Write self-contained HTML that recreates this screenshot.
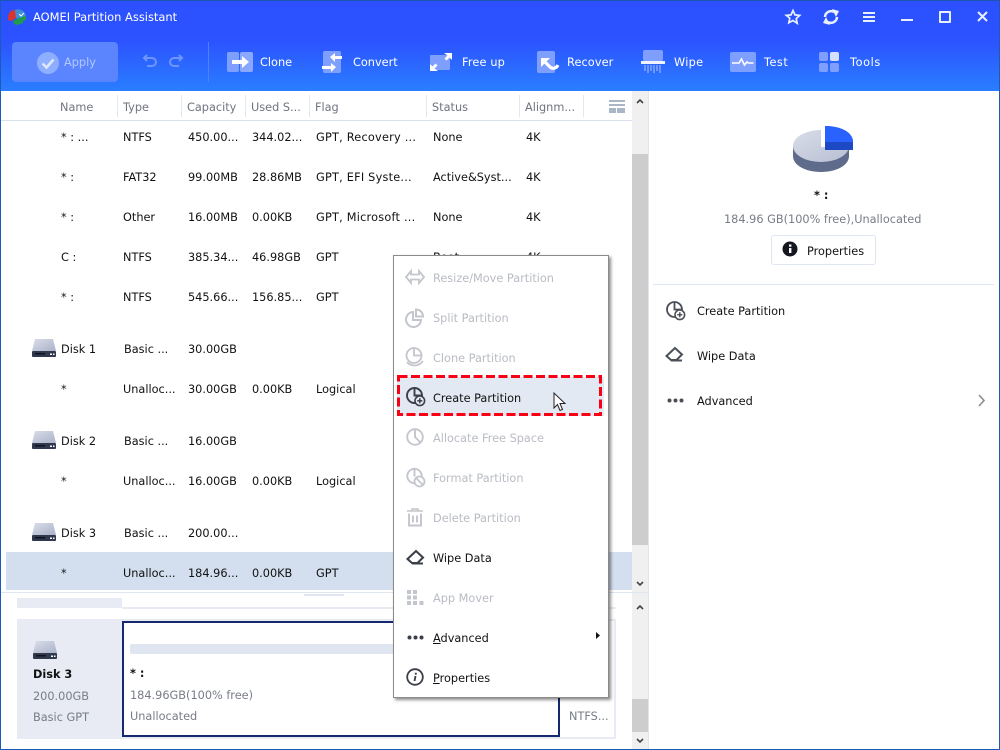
<!DOCTYPE html>
<html><head><meta charset="utf-8"><style>
html,body{margin:0;padding:0;width:1000px;height:750px;overflow:hidden;background:#fff}
body{position:relative;font-family:"DejaVu Sans","Liberation Sans",sans-serif;font-size:11.3px;color:#111}
.t{position:absolute;white-space:nowrap;line-height:16px;height:16px;margin-top:1px}
.b{position:absolute}
.h{color:#6f7480}
.w{color:#fff;font-size:11.3px}
.g{color:#777c86}
.m{color:#b9bcc4}
.f{letter-spacing:.22px}
svg{position:absolute;overflow:visible}
u{text-decoration:underline}
</style></head><body>
<div class="b" style="left:0;top:0;width:1000px;height:91px;background:linear-gradient(#2c50ff 0,#2c53ff 45%,#2a7eff 100%)"></div>
<div class="b" style="left:0;top:0;width:1000px;height:1px;background:#1a55b0"></div>
<div class="b" style="left:0;top:0;width:1px;height:750px;background:#1a5ab8"></div>
<div class="b" style="left:999px;top:0;width:1px;height:750px;background:#1a5ab8"></div>
<div class="b" style="left:0;top:749px;width:1000px;height:1px;background:#1a5ab8"></div>

<svg style="left:7px;top:8px" width="20" height="18" viewBox="0 0 20 18"><path d="M1 10C1 5 4 2 8 2L12 4 9 10 4 13 1 12Z" fill="#d9352f"/><path d="M8 2c5-2 10 1 11 6l-7 3-3-1Z" fill="#3d8fd8"/><path d="M6 13l6-3 7-2v4l-3 1v2l-6 2-3-1Z" fill="#1f9b4c"/><path d="M12 6l2 2 3-3" fill="none" stroke="#fff"/></svg>
<div class="t" style="left:33px;top:8px;color:#fff;font-size:11.45px">AOMEI Partition Assistant</div>

<svg style="left:785px;top:9px" width="16" height="16" viewBox="0 0 16 16"><path d="M8 1.500l2 4.400 4.700.5-3.500 3.200 1 4.700L8 11.500 3.800 13.800l1-4.700L1.300 6.400 6 5.900Z" fill="none" stroke="#e8efff" stroke-width="1.700"/></svg>
<svg style="left:823px;top:9px" width="16" height="16" viewBox="0 0 16 16"><path d="M2 8a6 6 0 0 1 9-5M14 8a6 6 0 0 1-9 5" fill="none" stroke="#e8efff" stroke-width="2.500"/><path d="M9 0l7 2-3 6ZM7 16l-7-2 3-6Z" fill="#e8efff"/></svg>
<div class="b" style="left:863px;top:12px;width:12px;height:2px;background:#e8efff"></div>
<div class="b" style="left:863px;top:16px;width:12px;height:2px;background:#e8efff"></div>
<div class="b" style="left:863px;top:20px;width:12px;height:2px;background:#e8efff"></div>
<div class="b" style="left:901px;top:19px;width:12px;height:2px;background:#e8efff"></div>
<div class="b" style="left:939px;top:11px;width:8px;height:8px;border:2px solid #e8efff;border-radius:1px"></div>
<svg style="left:977px;top:11px" width="12" height="12" viewBox="0 0 12 12"><path d="M1 1l9 9M10 1l-9 9" stroke="#e8efff" stroke-width="2"/></svg>

<div class="b" style="left:12px;top:42px;width:106px;height:40px;background:#5a85ff;border-radius:4px"></div>
<svg style="left:37px;top:52px" width="22" height="22" viewBox="0 0 22 22"><circle cx="11" cy="11" r="11" fill="#8eaeff"/><path d="M5.500 11.500l4 4 7-8" fill="none" stroke="#dfe8ff" stroke-width="2.500"/></svg>
<div class="t w" style="left:64px;top:54px;color:#b4c8ff">Apply</div>
<svg style="left:142px;top:54px" width="42" height="14" viewBox="0 0 42 14"><path d="M2 4h8a3.500 3.500 0 0 1 0 8H5M5 1L2 4l3 3" fill="none" stroke="#6f95ff" stroke-width="2"/><path d="M40 4h-8a3.500 3.500 0 0 0 0 8h5M37 1l3 3-3 3" fill="none" stroke="#6f95ff" stroke-width="2"/></svg>
<div class="b" style="left:208px;top:42px;width:1px;height:40px;background:#4f80ff"></div>

<svg style="left:227px;top:52px" width="26" height="20" viewBox="0 0 26 20"><rect x="0" width="12" height="20" rx="2" fill="#7f9fff"/><rect x="13" width="13" height="20" rx="2" fill="#8aa8ff"/><path d="M5 8h10V4l7 6-7 6v-4H5Z" fill="#fff"/></svg>
<div class="t w" style="left:260px;top:54px">Clone</div>
<svg style="left:322px;top:51px" width="22" height="22" viewBox="0 0 22 22"><rect x="1" width="18" height="22" rx="2" fill="#7f9fff"/><path d="M8 6l5-4v3h7v3h-7v3ZM14 16L9 12v3H0v3h9v3Z" fill="#fff"/></svg>
<div class="t w" style="left:353px;top:54px">Convert</div>
<svg style="left:430px;top:53px" width="22" height="18" viewBox="0 0 22 18"><rect y="2" width="20" height="15" rx="1" fill="#7f9fff"/><path d="M14 0h8v7l-2.500-2.500-3 3-2-2 3-3ZM8 18H0v-7l2.500 2.500 3-3 2 2-3 3Z" fill="#fff"/></svg>
<div class="t w" style="left:462px;top:54px;letter-spacing:.15px">Free up</div>
<svg style="left:537px;top:51px" width="22" height="22" viewBox="0 0 22 22"><rect width="18" height="22" rx="2" fill="#7f9fff"/><path d="M4 7h9l-9 9Z" fill="#fff"/><path d="M7 10l6 6c2 2 6 2 8-2" fill="none" stroke="#fff" stroke-width="3.200"/></svg>
<div class="t w" style="left:567px;top:54px;letter-spacing:.1px">Recover</div>
<svg style="left:641px;top:50px" width="24" height="24" viewBox="0 0 24 24"><rect x="2" width="20" height="11" rx="2" fill="#7f9fff"/><rect y="11" width="24" height="3" fill="#eef3ff"/><path d="M4 15v6M7 15v8M10 15v6M13 15v8M16 15v6M19 15v8" stroke="#86a5ff" stroke-width="1.500"/></svg>
<div class="t w" style="left:674px;top:54px;letter-spacing:.3px">Wipe</div>
<svg style="left:730px;top:52px" width="26" height="20" viewBox="0 0 26 20"><rect width="26" height="20" rx="2" fill="#7f9fff"/><path d="M2 11h7l2.500-4 3 6 2.500-3 1.500 1h5" fill="none" stroke="#fff" stroke-width="1.600"/></svg>
<div class="t w" style="left:764px;top:54px;letter-spacing:.5px">Test</div>
<svg style="left:819px;top:52px" width="20" height="20" viewBox="0 0 20 20"><rect width="9" height="9" rx="2" fill="#7f9fff"/><rect x="11" width="9" height="9" rx="2" fill="#d5e0ff"/><rect y="11" width="9" height="9" rx="2" fill="#7f9fff"/><rect x="11" y="11" width="9" height="9" rx="2" fill="#7f9fff"/></svg>
<div class="t w" style="left:850px;top:54px;letter-spacing:.6px">Tools</div>

<div class="t h" style="left:60px;top:99px">Name</div>
<div class="t h" style="left:123px;top:99px">Type</div>
<div class="t h" style="left:187px;top:99px">Capacity</div>
<div class="t h" style="left:251px;top:99px">Used S...</div>
<div class="t h" style="left:315px;top:99px">Flag</div>
<div class="t h" style="left:432px;top:99px">Status</div>
<div class="t h" style="left:525px;top:99px">Alignm...</div>
<div class="b" style="left:117px;top:95px;width:1px;height:22px;background:#e3e8f0"></div>
<div class="b" style="left:181px;top:95px;width:1px;height:22px;background:#e3e8f0"></div>
<div class="b" style="left:245px;top:95px;width:1px;height:22px;background:#e3e8f0"></div>
<div class="b" style="left:309px;top:95px;width:1px;height:22px;background:#e3e8f0"></div>
<div class="b" style="left:426px;top:95px;width:1px;height:22px;background:#e3e8f0"></div>
<div class="b" style="left:519px;top:95px;width:1px;height:22px;background:#e3e8f0"></div>
<div class="b" style="left:583px;top:95px;width:1px;height:22px;background:#e3e8f0"></div>
<div class="b" style="left:1px;top:120px;width:631px;height:1px;background:#d9e1ee"></div>
<svg style="left:609px;top:100px" width="16" height="13" viewBox="0 0 16 13"><rect width="16" height="2" fill="#a9b6c8"/><rect y="4" width="16" height="2" fill="#a9b6c8"/><rect y="8" width="7" height="5" fill="#a9b6c8"/><rect x="8" y="8" width="8" height="5" fill="#a9b6c8"/></svg>

<!-- scrollbar -->
<div class="b" style="left:632px;top:91px;width:16px;height:501px;background:#f0f0f0"></div>
<div class="b" style="left:632px;top:154px;width:16px;height:391px;background:#cdcdcd"></div>
<svg style="left:636px;top:98px" width="8" height="6" viewBox="0 0 8 6"><path d="M1 5l3-3 3 3" fill="none" stroke="#444" stroke-width="1.600"/></svg>
<svg style="left:636px;top:581px" width="8" height="6" viewBox="0 0 8 6"><path d="M1 1l3 3 3-3" fill="none" stroke="#444" stroke-width="1.600"/></svg>
<div class="b" style="left:648px;top:91px;width:1px;height:658px;background:#dfe6f0"></div>

<!-- rows -->
<div class="t" style="left:61px;top:129px">* : ...</div><div class="t" style="left:123px;top:129px">NTFS</div><div class="t" style="left:188px;top:129px">450.00...</div><div class="t" style="left:252px;top:129px">344.02...</div><div class="t f" style="left:316px;top:129px">GPT, Recovery ...</div><div class="t" style="left:433px;top:129px">None</div><div class="t" style="left:526px;top:129px">4K</div>
<div class="t" style="left:61px;top:169px">* :</div><div class="t" style="left:123px;top:169px">FAT32</div><div class="t" style="left:188px;top:169px">99.00MB</div><div class="t" style="left:252px;top:169px">28.86MB</div><div class="t f" style="left:316px;top:169px">GPT, EFI Syste...</div><div class="t" style="left:433px;top:169px">Active&amp;Syst...</div><div class="t" style="left:526px;top:169px">4K</div>
<div class="t" style="left:61px;top:209px">* :</div><div class="t" style="left:123px;top:209px">Other</div><div class="t" style="left:188px;top:209px">16.00MB</div><div class="t" style="left:252px;top:209px">0.00KB</div><div class="t f" style="left:316px;top:209px">GPT, Microsoft ...</div><div class="t" style="left:433px;top:209px">None</div><div class="t" style="left:526px;top:209px">4K</div>
<div class="t" style="left:61px;top:249px">C :</div><div class="t" style="left:123px;top:249px">NTFS</div><div class="t" style="left:188px;top:249px">385.34...</div><div class="t" style="left:252px;top:249px">46.98GB</div><div class="t" style="left:316px;top:249px">GPT</div><div class="t" style="left:433px;top:249px">Boot</div><div class="t" style="left:526px;top:249px">4K</div>
<div class="t" style="left:61px;top:289px">* :</div><div class="t" style="left:123px;top:289px">NTFS</div><div class="t" style="left:188px;top:289px">545.66...</div><div class="t" style="left:252px;top:289px">156.85...</div><div class="t" style="left:316px;top:289px">GPT</div>

<svg style="left:32px;top:339px" width="24" height="18" viewBox="0 0 24 18"><defs><linearGradient id="d" x1="0" y1="0" x2="1" y2="1"><stop offset="0" stop-color="#d9deea"/><stop offset="1" stop-color="#aab2c8"/></linearGradient></defs><path d="M3 0h18l3 12H0Z" fill="url(#d)"/><rect y="12" width="24" height="6" rx="1" fill="#30384e"/><rect x="3" y="14" width="10" height="1.500" fill="#10141f"/><rect x="18" y="14.500" width="2" height="1.500" fill="#fff"/><rect x="21" y="14.500" width="1.500" height="1.500" fill="#fff"/></svg>
<div class="t" style="left:61px;top:341px">Disk 1</div><div class="t" style="left:124px;top:341px">Basic ...</div><div class="t" style="left:188px;top:341px">30.00GB</div>
<div class="t" style="left:61px;top:381px">*</div><div class="t" style="left:123px;top:381px">Unalloc...</div><div class="t" style="left:188px;top:381px">30.00GB</div><div class="t" style="left:252px;top:381px">0.00KB</div><div class="t" style="left:316px;top:381px">Logical</div>

<svg style="left:32px;top:431px" width="24" height="18" viewBox="0 0 24 18"><path d="M3 0h18l3 12H0Z" fill="url(#d)"/><rect y="12" width="24" height="6" rx="1" fill="#30384e"/><rect x="3" y="14" width="10" height="1.500" fill="#10141f"/><rect x="18" y="14.500" width="2" height="1.500" fill="#fff"/><rect x="21" y="14.500" width="1.500" height="1.500" fill="#fff"/></svg>
<div class="t" style="left:61px;top:433px">Disk 2</div><div class="t" style="left:124px;top:433px">Basic ...</div><div class="t" style="left:188px;top:433px">16.00GB</div>
<div class="t" style="left:61px;top:473px">*</div><div class="t" style="left:123px;top:473px">Unalloc...</div><div class="t" style="left:188px;top:473px">16.00GB</div><div class="t" style="left:252px;top:473px">0.00KB</div><div class="t" style="left:316px;top:473px">Logical</div>

<svg style="left:32px;top:523px" width="24" height="18" viewBox="0 0 24 18"><path d="M3 0h18l3 12H0Z" fill="url(#d)"/><rect y="12" width="24" height="6" rx="1" fill="#30384e"/><rect x="3" y="14" width="10" height="1.500" fill="#10141f"/><rect x="18" y="14.500" width="2" height="1.500" fill="#fff"/><rect x="21" y="14.500" width="1.500" height="1.500" fill="#fff"/></svg>
<div class="t" style="left:61px;top:525px">Disk 3</div><div class="t" style="left:124px;top:525px">Basic ...</div><div class="t" style="left:188px;top:525px">200.00...</div>

<div class="b" style="left:6px;top:552px;width:626px;height:38px;background:#d3dfee"></div>
<div class="t" style="left:61px;top:565px">*</div><div class="t" style="left:123px;top:565px">Unalloc...</div><div class="t" style="left:188px;top:565px">184.96...</div><div class="t" style="left:252px;top:565px">0.00KB</div><div class="t" style="left:316px;top:565px">GPT</div>

<!-- bottom pane -->
<div class="b" style="left:1px;top:592px;width:647px;height:1px;background:#dfe6f0"></div>
<div class="b" style="left:304px;top:594px;width:40px;height:2px;background:#dfe6f2"></div>
<div class="b" style="left:17px;top:598px;width:105px;height:10px;background:#e8ebf3"></div>
<div class="b" style="left:122px;top:607px;width:494px;height:2px;background:#e8ebf3"></div>
<div class="b" style="left:17px;top:619px;width:599px;height:120px;background:#e8ebf4"></div>
<svg style="left:33px;top:641px" width="24" height="18" viewBox="0 0 24 18"><path d="M3 0h18l3 12H0Z" fill="url(#d)"/><rect y="12" width="24" height="6" rx="1" fill="#30384e"/><rect x="3" y="14" width="10" height="1.500" fill="#10141f"/><rect x="18" y="14.500" width="2" height="1.500" fill="#fff"/><rect x="21" y="14.500" width="1.500" height="1.500" fill="#fff"/></svg>
<div class="t" style="left:33px;top:666px;font-weight:bold">Disk 3</div>
<div class="t g" style="left:33px;top:688px">200.00GB</div>
<div class="t g" style="left:33px;top:709px">Basic GPT</div>
<div class="b" style="left:122px;top:621px;width:434px;height:112px;background:#fff;border:2px solid #14296e"></div>
<div class="b" style="left:130px;top:644px;width:420px;height:10px;background:#dfe6f2;border-radius:2px"></div>
<div class="t" style="left:130px;top:665px;font-weight:bold">* :</div>
<div class="t g" style="left:130px;top:687px">184.96GB(100% free)</div>
<div class="t g" style="left:130px;top:708px">Unallocated</div>
<div class="b" style="left:560px;top:621px;width:54px;height:116px;background:#fff"></div>
<div class="t g" style="left:569px;top:708px">NTFS...</div>
<div class="b" style="left:632px;top:593px;width:16px;height:156px;background:#f0f0f0"></div>
<div class="b" style="left:632px;top:699px;width:16px;height:33px;background:#cdcdcd"></div>
<svg style="left:636px;top:604px" width="8" height="6" viewBox="0 0 8 6"><path d="M1 5l3-3 3 3" fill="none" stroke="#444" stroke-width="1.600"/></svg>
<svg style="left:636px;top:738px" width="8" height="6" viewBox="0 0 8 6"><path d="M1 1l3 3 3-3" fill="none" stroke="#444" stroke-width="1.600"/></svg>

<!-- right pane -->
<svg style="left:792px;top:125px" width="62" height="48" viewBox="0 0 62 48"><defs><linearGradient id="p" x1="0" y1="0" x2="1" y2="1"><stop offset="0" stop-color="#d8dde8"/><stop offset="1" stop-color="#b8bfd2"/></linearGradient></defs><path d="M1 21v10c0 9 12 16 28 16s28-7 28-16V21Z" fill="#5f6b8a"/><ellipse cx="29" cy="21" rx="28" ry="16" fill="url(#p)"/><rect x="29" y="3" width="6" height="19" fill="#fff"/><path d="M33 1c15 0 28 6 28 16v8H33Z" fill="#1e49c4"/><path d="M33 1c15 0 28 6 28 16H33Z" fill="#2a62ff"/></svg>
<div class="t" style="left:814px;top:187px;font-weight:bold">* :</div>
<div class="t g" style="left:724px;top:211px">184.96 GB(100% free),Unallocated</div>
<div class="b" style="left:771px;top:235px;width:103px;height:28px;border:1px solid #dfe6f0;border-radius:3px;background:#fff"></div>
<svg style="left:782px;top:241px" width="16" height="16" viewBox="0 0 16 16"><circle cx="8" cy="8" r="7.500" fill="#14171f"/><rect x="7" y="7" width="2.400" height="5" fill="#fff"/><rect x="7" y="3.500" width="2.400" height="2.200" fill="#fff"/></svg>
<div class="t" style="left:807px;top:243px">Properties</div>
<div class="b" style="left:653px;top:284px;width:341px;height:1px;background:#dfe6f2"></div>

<svg style="left:666px;top:301px" width="20" height="20" viewBox="0 0 20 20"><circle cx="8.500" cy="8.500" r="7.500" fill="none" stroke="#4a4f58" stroke-width="1.800"/><path d="M8.500 1V8.500H16" fill="none" stroke="#4a4f58" stroke-width="1.800"/><circle cx="13.800" cy="13.800" r="4.800" fill="#fff" stroke="#4a4f58" stroke-width="1.600"/><path d="M11.300 13.800h5M13.800 11.300v5" stroke="#4a4f58" stroke-width="1.500"/></svg>
<div class="t" style="left:697px;top:303px">Create Partition</div>
<svg style="left:665px;top:346px" width="20" height="18" viewBox="0 0 20 18"><path d="M1.500 10L10 2l7 6.500-5.500 5.500H6Z M6 14.500h11" fill="none" stroke="#4a4f58" stroke-width="2"/></svg>
<div class="t" style="left:697px;top:348px">Wipe Data</div>
<svg style="left:667px;top:398px" width="18" height="5" viewBox="0 0 18 5"><circle cx="2.500" cy="2.500" r="2" fill="#4a4f58"/><circle cx="8.500" cy="2.500" r="2" fill="#4a4f58"/><circle cx="14.500" cy="2.500" r="2" fill="#4a4f58"/></svg>
<div class="t" style="left:697px;top:393px">Advanced</div>
<svg style="left:978px;top:394px" width="8" height="13" viewBox="0 0 8 13"><path d="M1 1l5 5.500L1 12" fill="none" stroke="#8a8d94" stroke-width="1.600"/></svg>

<!-- context menu -->
<div class="b" style="left:393px;top:255px;width:214px;height:441px;background:#fff;border:1px solid #8a8a8a;box-shadow:2px 2px 3px rgba(0,0,0,.45)"></div>
<div class="b" style="left:397px;top:377px;width:207px;height:39px;background:#e2e9f3"></div>
<svg style="left:397px;top:375px" width="205" height="42" viewBox="0 0 205 42"><rect x="1.500" y="1.500" width="202" height="38" fill="none" stroke="#fa0014" stroke-width="3" stroke-dasharray="9 3.500"/></svg>

<svg style="left:405px;top:270px" width="20" height="14" viewBox="0 0 20 14"><path d="M6 1L1 7l5 6V9.500h8V13l5-6-5-6v3.500H6Z" fill="none" stroke="#c3c6cc" stroke-width="1.800"/></svg>
<div class="t m" style="left:433px;top:270px">Resize/Move Partition</div>
<svg style="left:405px;top:308px" width="20" height="20" viewBox="0 0 20 20"><path d="M8 4a7.500 7.500 0 1 0 8 8H8Z" fill="none" stroke="#c3c6cc" stroke-width="2"/><path d="M11 1.500c4 0 7 3 7 7h-7Z" fill="none" stroke="#c3c6cc" stroke-width="2"/></svg>
<div class="t m" style="left:433px;top:310px">Split Partition</div>
<svg style="left:405px;top:347px" width="20" height="20" viewBox="0 0 20 20"><circle cx="9" cy="8.500" r="7.500" fill="none" stroke="#c3c6cc" stroke-width="1.800"/><path d="M9 1v7.500h7.500M2 15c2 3 8 5 13 2 1-.7 2-2 3-3" fill="none" stroke="#c3c6cc" stroke-width="1.800"/></svg>
<div class="t m" style="left:433px;top:350px">Clone Partition</div>
<svg style="left:406px;top:387px" width="20" height="20" viewBox="0 0 20 20"><circle cx="8.500" cy="8.500" r="7.500" fill="none" stroke="#3a3f48" stroke-width="1.900"/><path d="M8.500 1V8.500H16" fill="none" stroke="#3a3f48" stroke-width="1.900"/><circle cx="13.800" cy="13.800" r="4.800" fill="#e2e9f3" stroke="#3a3f48" stroke-width="1.600"/><path d="M11.300 13.800h5M13.800 11.300v5" stroke="#3a3f48" stroke-width="1.500"/></svg>
<div class="t" style="left:433px;top:390px">Create Partition</div>
<svg style="left:553px;top:392px" width="14" height="21" viewBox="0 0 14 21"><path d="M1 1v15l3.500-3.500 2.500 6 2.500-1-2.500-6h5Z" fill="#fff" stroke="#222" stroke-width="1"/></svg>
<svg style="left:406px;top:428px" width="18" height="18" viewBox="0 0 18 18"><circle cx="9" cy="9" r="7.800" fill="none" stroke="#c3c6cc" stroke-width="1.900"/><path d="M9 1.500V9l5 5" fill="none" stroke="#c3c6cc" stroke-width="1.900"/></svg>
<div class="t m" style="left:433px;top:430px">Allocate Free Space</div>
<svg style="left:406px;top:468px" width="20" height="20" viewBox="0 0 20 20"><circle cx="8.500" cy="8" r="7.200" fill="none" stroke="#c3c6cc" stroke-width="1.900"/><path d="M8.500 1V8.500" fill="none" stroke="#c3c6cc" stroke-width="1.900"/><circle cx="13.500" cy="13.500" r="5" fill="#fff" stroke="#c3c6cc" stroke-width="1.800"/><path d="M10 10l7 7" stroke="#c3c6cc" stroke-width="1.800"/></svg>
<div class="t m" style="left:433px;top:470px">Format Partition</div>
<svg style="left:406px;top:508px" width="18" height="19" viewBox="0 0 18 19"><path d="M1 3h16M6 3V1h6v2" fill="none" stroke="#c3c6cc" stroke-width="1.600"/><path d="M3 5.500v12h12v-12M7 7.500v7M11 7.500v7" fill="none" stroke="#c3c6cc" stroke-width="1.900"/></svg>
<div class="t m" style="left:433px;top:510px">Delete Partition</div>
<svg style="left:406px;top:549px" width="20" height="18" viewBox="0 0 20 18"><path d="M1.500 10L10 2l7 6.500-5.500 5.500H6Z M6 14.500h11" fill="none" stroke="#3a3f48" stroke-width="2.100"/></svg>
<div class="t" style="left:433px;top:550px">Wipe Data</div>
<svg style="left:407px;top:590px" width="17" height="15" viewBox="0 0 17 15"><g fill="#c3c6cc"><rect width="4" height="4"/><rect x="6" width="4" height="4"/><rect y="5.500" width="4" height="4"/><rect x="6" y="5.500" width="4" height="4"/><rect y="11" width="4" height="4"/><rect x="6" y="11" width="4" height="4"/><rect x="12.500" y="11" width="4" height="4"/></g></svg>
<div class="t m" style="left:433px;top:590px">App Mover</div>
<svg style="left:407px;top:635px" width="18" height="5" viewBox="0 0 18 5"><circle cx="2.500" cy="2.500" r="2" fill="#3a3f48"/><circle cx="8.500" cy="2.500" r="2" fill="#3a3f48"/><circle cx="14.500" cy="2.500" r="2" fill="#3a3f48"/></svg>
<div class="t" style="left:433px;top:630px"><u>A</u>dvanced</div>
<svg style="left:596px;top:632px" width="4" height="7" viewBox="0 0 4 7"><path d="M0 0l4 3.500L0 7Z" fill="#111"/></svg>
<svg style="left:406px;top:668px" width="18" height="18" viewBox="0 0 18 18"><circle cx="9" cy="9" r="7.800" fill="none" stroke="#3a3f48" stroke-width="1.800"/><path d="M9.500 8L8.500 13M9.800 4.800v1.800" stroke="#3a3f48" stroke-width="1.900" fill="none"/></svg>
<div class="t" style="left:433px;top:670px"><u>P</u>roperties</div>
</body></html>
